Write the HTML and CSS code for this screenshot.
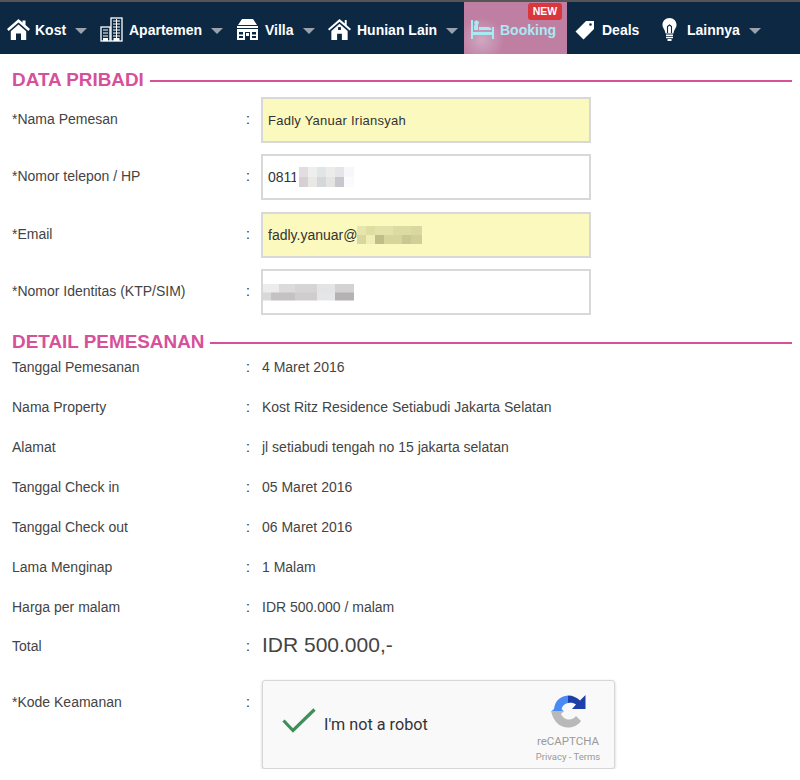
FILE: index.html
```html
<!DOCTYPE html>
<html lang="en">
<head>
  <meta charset="UTF-8"><title>Booking</title>
  <link rel="stylesheet" href="styles.css">
</head>
<body>

  <nav class="topnav">
    <a class="nav-item item-kost">
      <svg class="ico" width="23" height="21" viewBox="0 0 23 21"><path fill="#fff" d="M11.500 0 0 10 1.700 12 11.500 3.600 21.300 12 23 10 18.500 6V1.500H15.500V3.400ZM3.800 12.200V21H9V14.500H14V21H19.200V12.200L11.500 5.600Z"/></svg>
      <span>Kost</span><i class="caret"></i>
    </a>
    <a class="nav-item item-apt">
      <svg class="ico" width="23" height="25" viewBox="0 0 23 25"><g fill="none" stroke="#fff" stroke-width="1.300"><rect x="1" y="10" width="9" height="14"/><rect x="11" y="1" width="11" height="23"/></g><g stroke="#fff" stroke-width="1"><path d="M13 4H20M13 7H20M13 10H20M13 13H20M13 16H20M13 19H20M16.500 2V22M3 13H8M3 16H8M3 19H8"/></g><path fill="#fff" d="M3 21H8V24H3ZM13.500 21H19.500V24H13.500Z"/></svg>
      <span>Apartemen</span><i class="caret"></i>
    </a>
    <a class="nav-item item-villa">
      <svg class="ico" width="23" height="21" viewBox="0 0 23 21"><path fill="#fff" d="M6 0H17L21 6H2ZM1 7H22V9H1ZM1 10H22V21H1Z"/><path fill="#0c2843" d="M3 13H7V15.500H3ZM9 13H14V21H9ZM16 13H20V15.500H16ZM3 17H7V19H3ZM16 17H20V19H16Z"/><path fill="#fff" d="M10 14H13V17H10Z"/></svg>
      <span>Villa</span><i class="caret"></i>
    </a>
    <a class="nav-item item-hunian">
      <svg class="ico" width="23" height="23" viewBox="0 0 24 24"><path fill="#fff" d="M12 1 0 11.500 1.300 13 12 3.800 22.700 13 24 11.500 19.500 7.600V2H17.500V5.800ZM3.500 13.500V23H9.500V16.500H14.500V23H20.500V13.500L12 6Z"/><path fill="#0c2843" d="M10.500 9.500H13.500V12.500H10.500Z"/></svg>
      <span>Hunian Lain</span><i class="caret"></i>
    </a>
    <a class="nav-item item-booking">
      <span class="badge">NEW</span>
      <svg class="ico" width="23" height="19" viewBox="0 0 23 19"><path fill="#a9e9f2" d="M0 0H2V12H21V7H23V19H21V15H2V19H0ZM3 10V6.500C3 5 4 4 5.500 4H7V10ZM8 10V7H17C19 7 20.500 8 20.500 10Z"/><circle cx="5.500" cy="2.800" r="2.400" fill="#a9e9f2"/></svg>
      <span>Booking</span>
    </a>
    <a class="nav-item item-deals">
      <svg class="ico" width="20" height="20" viewBox="0 0 20 20"><path fill="#fff" fill-rule="evenodd" d="M11 1H19V9L8.500 19.500 0.500 11.500ZM15.500 3.200A1.300 1.300 0 1 0 15.501 5.800 1.300 1.300 0 1 0 15.500 3.200Z"/></svg>
      <span>Deals</span>
    </a>
    <a class="nav-item item-lainnya">
      <svg class="ico" width="15" height="23" viewBox="0 0 15 23"><path fill="#fff" d="M7.500 0C3.400 0 0.500 3 0.500 6.800 0.500 10 3 11.500 3.500 15.500H11.500C12 11.500 14.500 10 14.500 6.800 14.500 3 11.600 0 7.500 0Z"/><path fill="none" stroke="#0c2843" stroke-width="1.100" d="M5.500 15V8.500L7.500 7 9.500 8.500V15"/><path fill="#fff" d="M4 16.500H11V18H4ZM4 18.800H11V20.300H4ZM5.500 21H9.500V23H5.500Z"/></svg>
      <span>Lainnya</span><i class="caret"></i>
    </a>
  </nav>

  <h2 class="sec-title"><span>DATA PRIBADI</span></h2>

  <div class="form-rows">
    <div class="form-row">
      <label>*Nama Pemesan</label><b class="colon">:</b>
      <div class="field filled name">Fadly Yanuar Iriansyah</div>
    </div>
    <div class="form-row">
      <label>*Nomor telepon / HP</label><b class="colon">:</b>
      <div class="field">0811<i class="pix pix-phone"></i></div>
    </div>
    <div class="form-row">
      <label>*Email</label><b class="colon">:</b>
      <div class="field filled">fadly.yanuar@<i class="pix pix-mail"></i></div>
    </div>
    <div class="form-row">
      <label>*Nomor Identitas (KTP/SIM)</label><b class="colon">:</b>
      <div class="field"><i class="pix pix-id"></i></div>
    </div>
  </div>

  <h2 class="sec-title title-detail"><span>DETAIL PEMESANAN</span></h2>

  <div class="detail">
    <div class="row"><label>Tanggal Pemesanan</label><b class="colon">:</b><div>4 Maret 2016</div></div>
    <div class="row"><label>Nama Property</label><b class="colon">:</b><div>Kost Ritz Residence Setiabudi Jakarta Selatan</div></div>
    <div class="row"><label>Alamat</label><b class="colon">:</b><div>jl setiabudi tengah no 15 jakarta selatan</div></div>
    <div class="row"><label>Tanggal Check in</label><b class="colon">:</b><div>05 Maret 2016</div></div>
    <div class="row"><label>Tanggal Check out</label><b class="colon">:</b><div>06 Maret 2016</div></div>
    <div class="row"><label>Lama Menginap</label><b class="colon">:</b><div>1 Malam</div></div>
    <div class="row"><label>Harga per malam</label><b class="colon">:</b><div>IDR 500.000 / malam</div></div>
    <div class="row row-total"><label>Total</label><b class="colon">:</b><div class="total">IDR 500.000,-</div></div>
    <div class="row row-captcha">
      <label>*Kode Keamanan</label><b class="colon">:</b>
      <div class="captcha">
        <svg class="tick" width="34" height="25" viewBox="0 0 34 25"><path fill="none" stroke="#3f8f58" stroke-width="3.200" d="M1.500 12.500 11 22.500 32.500 1.500"/></svg>
        <span class="captcha-text">I'm not a robot</span>
        <div class="captcha-brand">
          <svg width="36" height="36" viewBox="0 0 36 36">
            <path fill="#4a8af4" d="M4 16C5 8 10 3 18 2.500V10C14.500 10.500 12.500 12.500 11.500 16L14 18.500H1Z" />
            <path fill="#1c3fa8" d="M18 2.500C23 2.500 27 4.500 30 7.500L35.500 2V16H22L26 11.500C24 10 21.500 9.500 18 10Z" />
            <path fill="#b9b9b9" d="M1 18H14L11 21C13 25 16 26.500 19 26.500 22 26.500 24.500 25 26 23L31 28C28 32 24 34.500 18 34.500 9.500 34.500 3 28 1 18Z" />
          </svg>
          <div class="brand-name">reCAPTCHA</div>
          <div class="brand-links">Privacy - Terms</div>
        </div>
      </div>
    </div>
  </div>

</body>
</html>
```

FILE: styles.css
```css
* { margin:0; padding:0; box-sizing:border-box; }
body { font-family:'Liberation Sans',Arial,sans-serif; font-size:14px; color:#444; background:#fff; overflow:hidden; }

/* Top nav */
.topnav { display:flex; height:54px; background:#0c2843; border-top:2px solid #555; }
.nav-item { position:relative; display:flex; align-items:center; padding-top:3px; color:#fff; font-weight:bold; font-size:14px; height:100%; }
.nav-item .ico { flex:none; margin-right:5px; }
.caret { width:0; height:0; border-left:6px solid transparent; border-right:6px solid transparent; border-top:6px solid #9aa3ad; margin-left:9px; margin-top:2px; }
.item-kost { padding-left:7px; width:100px; }
.item-apt { width:136px; }
.item-apt .ico { margin-right:6px; }
.item-villa { width:92px; }
.item-villa .ico { margin-right:6px; }
.item-hunian { width:136px; }
.item-hunian .ico { margin-right:6px; }
.item-booking { width:103px; padding-left:7px; color:#a9e9f2; background:radial-gradient(circle at 18px 38px,#cfa8c2 0,#bf7fa3 22px); }
.item-booking .ico { margin-right:6px; }
.item-deals { width:87px; padding-left:8px; }
.item-deals .ico { margin-right:7px; }
.item-lainnya { padding-left:8px; }
.item-lainnya .ico { margin-right:10px; }
.badge { position:absolute; top:1px; right:5px; width:34px; height:17px; background:#d9363e; color:#fff; font-size:10.500px; line-height:17px; text-align:center; border-radius:3px; }

/* Section headings */
.sec-title { display:flex; align-items:center; gap:6px; margin:15px 8px 0 12px; color:#d6509a; font-size:18.900px; line-height:22px; }
.sec-title::after { content:""; flex:1; height:2px; background:#d6509a; margin-top:1px; }
.title-detail { margin-top:16.300px; }

/* Form rows */
.form-rows { margin-top:6px; display:flex; flex-direction:column; gap:11.400px; }
.form-row { display:flex; height:46px; padding-left:12px; }
.form-row label { width:234px; padding-top:14px; }
.colon { width:15px; color:#333; font-weight:normal; padding-top:14px; }
.field { width:330px; height:46px; border:2px solid #d8d8d8; padding-left:5px; display:flex; align-items:center; font-size:14px; color:#333; background:#fff; }
.field.filled { background:#fbf9bd; }
.field.name { font-size:13px; letter-spacing:.25px; }

/* blurred-out personal data */
.pix { display:block; background-repeat:no-repeat; background-size:100% 50%; background-position:top,bottom; }
.pix-phone { width:58px; height:20px; margin-left:-2px; background-image:
  linear-gradient(90deg,#fff 3px,#e2dde0 3px,#e2dde0 12px,#eeeeec 12px,#eeeeec 21px,#e2e5e5 21px,#e2e5e5 30px,#ececea 30px,#ececea 39px,#e6e4e8 39px,#e6e4e8 48px,#f7f7fa 48px,#f7f7fa 58px),
  linear-gradient(90deg,#fff 3px,#d6d0d4 3px,#d6d0d4 12px,#e8e8e5 12px,#e8e8e5 21px,#d5d8d8 21px,#d5d8d8 30px,#e4e4e2 30px,#e4e4e2 39px,#c9c7ce 39px,#c9c7ce 48px,#fbfbfd 48px,#fbfbfd 58px); }
.pix-mail { width:65px; height:18px; background-image:
  linear-gradient(90deg,#e6e5ac 0,#e6e5ac 9px,#dedda2 9px,#dedda2 18px,#e3e2a8 18px,#e3e2a8 36px,#dcdba2 36px,#dcdba2 54px,#d9d8a0 54px,#d9d8a0 65px),
  linear-gradient(90deg,#d8d79c 0,#d8d79c 9px,#f0eeb4 9px,#f0eeb4 18px,#bfbd88 18px,#bfbd88 27px,#d6d59c 27px,#d6d59c 45px,#c9c892 45px,#c9c892 54px,#d0cf98 54px,#d0cf98 65px); }
.pix-id { width:91px; height:17px; margin-left:-5px; background-image:
  linear-gradient(90deg,#ececec 0,#ececec 16px,#dcdbdb 16px,#dcdbdb 32px,#d6d4d5 32px,#d6d4d5 54px,#e2e4e6 54px,#e2e4e6 72px,#d4d3d3 72px,#d4d3d3 91px),
  linear-gradient(90deg,#d8d8d8 0,#d8d8d8 8px,#c4c2c3 8px,#c4c2c3 32px,#cfcdce 32px,#cfcdce 54px,#e4e6e8 54px,#e4e6e8 72px,#b4b2b3 72px,#b4b2b3 91px); }

/* Detail */
.detail { margin-top:-3px; }
.row { display:flex; height:40px; padding:9px 0 0 12px; line-height:16px; }
.row label { width:234px; }
.row .colon { width:16px; padding-top:0; }
.row-total { height:50px; padding-top:7px; }
.row-total label, .row-total .colon { margin-top:1px; }
.row-total .total { font-size:21px; margin-top:-3px; line-height:22px; }
.row-captcha { height:auto; padding-top:0; }
.row-captcha label { padding-top:14px; }
.row-captcha .colon { padding-top:14px; }

.captcha { width:353px; height:89px; display:flex; align-items:center; padding-left:19px; position:relative; background:#f9f9f9; border:1px solid #d6d6d6; border-radius:3px; box-shadow:0 1px 3px rgba(0,0,0,.2); }
.tick { margin-top:-8px; }
.captcha-text { margin-left:8px; font-family:Roboto,sans-serif; font-size:16.200px; color:#333; }
.captcha-brand { position:absolute; right:13px; top:12px; width:66px; text-align:center; font-family:Roboto,sans-serif; color:#9a9a9a; }
.captcha-brand svg { display:block; margin:0 auto; }
.brand-name { font-size:11.500px; line-height:14px; margin-top:5px; }
.brand-links { font-size:9.500px; line-height:12px; margin-top:3px; }
```
